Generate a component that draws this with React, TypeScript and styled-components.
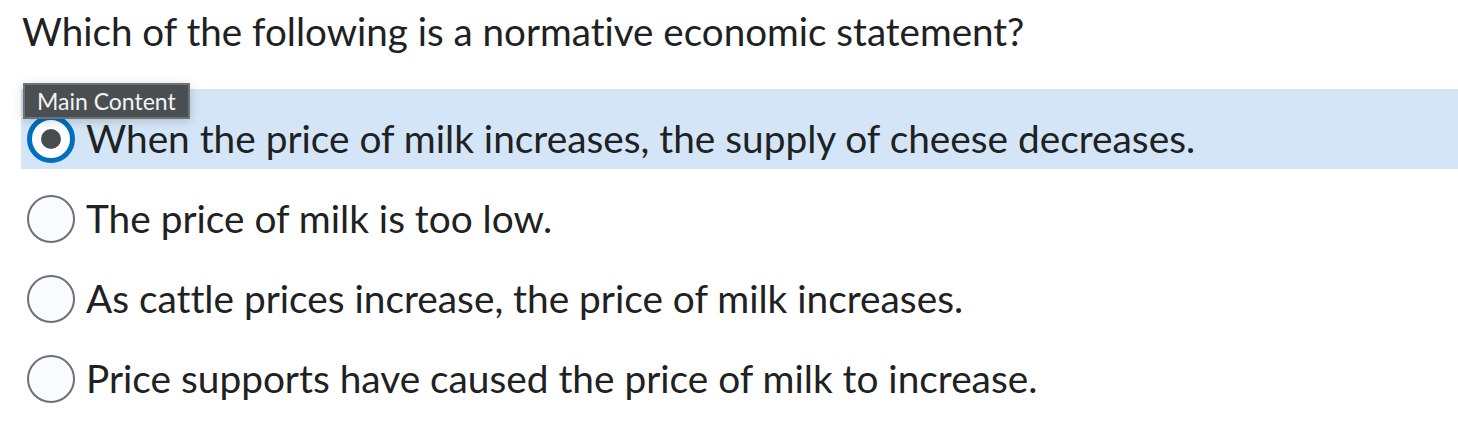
import React, { useState } from 'react';
import styled, { createGlobalStyle } from 'styled-components';

const GlobalStyle = createGlobalStyle`
  html, body {
    margin: 0;
    padding: 0;
    background: #ffffff;
  }
  body {
    font-family: Lato, 'Noto Sans', sans-serif;
    font-variant-ligatures: none;
    color: #202122;
  }
`;

const options = [
  'When the price of milk increases, the supply of cheese decreases.',
  'The price of milk is too low.',
  'As cattle prices increase, the price of milk increases.',
  'Price supports have caused the price of milk to increase.',
];

export default function App() {
  const [selected, setSelected] = useState(0);

  return (
    <Page>
      <GlobalStyle />
      <Question>Which of the following is a normative economic statement?</Question>
      <Choices>
        <Tooltip>Main Content</Tooltip>
        {options.map((text, i) => (
          <Choice key={text} $active={i === selected} onClick={() => setSelected(i)}>
            <Radio $checked={i === selected} />
            <Label>{text}</Label>
          </Choice>
        ))}
      </Choices>
    </Page>
  );
}

const Page = styled.div`
  width: 1458px;
  height: 428px;
  padding: 0 0 0 21px;
  box-sizing: border-box;
  overflow: hidden;
`;

const Question = styled.h1`
  margin: 0;
  padding: 8px 0 0 1px;
  height: 89px;
  box-sizing: border-box;
  font-size: 38.6px;
  font-weight: 400;
  line-height: 1.2;
  color: #202122;
`;

const Choices = styled.div`
  position: relative;
  display: flex;
  flex-direction: column;
`;

const Tooltip = styled.div`
  position: absolute;
  top: -6px;
  left: 2px;
  z-index: 2;
  height: 36px;
  padding: 0 12px;
  box-sizing: border-box;
  display: flex;
  align-items: center;
  background: #4a4f52;
  border: 2px solid #6e7376;
  box-shadow: 0 2px 10px rgba(0, 0, 0, 0.18);
  color: #f4f4f4;
  font-size: 23px;
  line-height: 1;
`;

const Choice = styled.label<{ $active: boolean }>`
  display: flex;
  align-items: flex-start;
  gap: 11px;
  height: 80px;
  box-sizing: border-box;
  padding: 26px 0 0 6px;
  background: ${(p) => (p.$active ? '#d3e5f6' : 'transparent')};
  cursor: pointer;
`;

const Radio = styled.span<{ $checked: boolean }>`
  flex: 0 0 auto;
  width: 48px;
  height: 48px;
  box-sizing: border-box;
  border-radius: 50%;
  display: flex;
  align-items: center;
  justify-content: center;
  background: ${(p) => (p.$checked ? '#ffffff' : '#f9fbff')};
  border: ${(p) => (p.$checked ? '5px solid #006fbf' : '2px solid #6d7175')};
  &::after {
    content: '';
    display: ${(p) => (p.$checked ? 'block' : 'none')};
    width: 20px;
    height: 20px;
    border-radius: 50%;
    background: #494c4e;
  }
`;

const Label = styled.span`
  font-size: 38.8px;
  line-height: 1.2;
  color: #202122;
  white-space: nowrap;
`;
